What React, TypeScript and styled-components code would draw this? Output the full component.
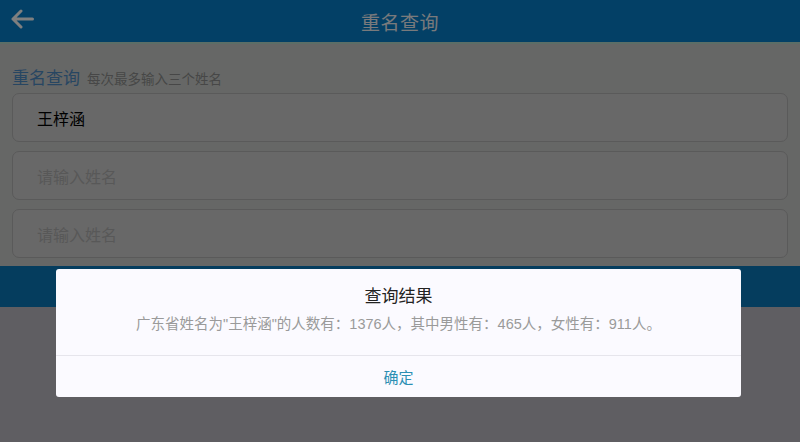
import styled, { createGlobalStyle } from "styled-components";

const GlobalStyle = createGlobalStyle`
  html, body {
    margin: 0;
    padding: 0;
    background: #bfbdc5;
    font-family: "Noto Sans CJK SC", "Noto Sans", sans-serif;
  }
`;

const names = ["王梓涵", "", ""];

export default function App() {
  return (
    <>
      <GlobalStyle />
      <StyledPage>
        <StyledHeader>
          <StyledBack aria-label="返回">
            <svg width="24" height="20" viewBox="0 0 24 20" fill="none">
              <path
                d="M22.5 10H3M11 2L3 10l8 8"
                stroke="#ffffff"
                strokeWidth="3"
                strokeLinecap="round"
                strokeLinejoin="round"
              />
            </svg>
          </StyledBack>
          <StyledTitle>重名查询</StyledTitle>
        </StyledHeader>

        <StyledForm>
          <StyledLabelRow>
            <StyledLabel>重名查询</StyledLabel>
            <StyledHint>每次最多输入三个姓名</StyledHint>
          </StyledLabelRow>
          {names.map((name, i) => (
            <StyledInput key={i} defaultValue={name} placeholder="请输入姓名" />
          ))}
        </StyledForm>

        <StyledSubmit aria-label="查询" />
      </StyledPage>

      <StyledOverlay />

      <StyledDialog>
        <StyledDialogBody>
          <StyledDialogTitle>查询结果</StyledDialogTitle>
          <StyledDialogText>
            广东省姓名为"王梓涵"的人数有：1376人，其中男性有：465人，女性有：911人。
          </StyledDialogText>
        </StyledDialogBody>
        <StyledDialogButton>确定</StyledDialogButton>
      </StyledDialog>
    </>
  );
}

const StyledPage = styled.div`
  min-height: 442px;
  display: flex;
  flex-direction: column;
`;

const StyledHeader = styled.header`
  height: 42px;
  background: #0680cc;
  border-bottom: 2px solid #b9dccf;
  display: flex;
  align-items: center;
  justify-content: center;
  position: relative;
`;

const StyledBack = styled.span`
  position: absolute;
  left: 10px;
  top: 9px;
  display: flex;
`;

const StyledTitle = styled.h1`
  margin: 0;
  font-size: 19px;
  font-weight: 400;
  color: #f2f4f8;
  letter-spacing: 0.5px;
`;

const StyledForm = styled.section`
  background: #cdcecd;
  padding: 20px 12px 8px;
  display: flex;
  flex-direction: column;
  gap: 9px;
`;

const StyledLabelRow = styled.div`
  display: flex;
  align-items: baseline;
  gap: 7px;
  height: 20px;
`;

const StyledLabel = styled.span`
  font-size: 17px;
  color: #4f8cc4;
`;

const StyledHint = styled.span`
  font-size: 13.5px;
  color: #8e8e8e;
`;

const StyledInput = styled.input`
  box-sizing: border-box;
  height: 49px;
  width: 100%;
  padding: 0 24px;
  border: 1px solid #b4b4b4;
  border-radius: 7px;
  background: #d0d0d0;
  font-family: inherit;
  font-size: 16px;
  color: #000000;
  outline: none;

  &::placeholder {
    color: #b0b0b0;
  }
`;

const StyledSubmit = styled.button`
  height: 41px;
  border: none;
  background: #0a7abc;
`;

const StyledOverlay = styled.div`
  position: fixed;
  inset: 0;
  background: rgba(0, 0, 0, 0.5);
`;

const StyledDialog = styled.div`
  position: fixed;
  top: 269px;
  left: 56px;
  width: 685px;
  background: #fbfaff;
  border-radius: 3px;
  display: flex;
  flex-direction: column;
`;

const StyledDialogBody = styled.div`
  padding: 15px 20px 21px;
  border-bottom: 1px solid #e6e5ec;
  display: flex;
  flex-direction: column;
  align-items: center;
  gap: 8px;
`;

const StyledDialogTitle = styled.h2`
  margin: 0;
  font-size: 17px;
  line-height: 22px;
  font-weight: 400;
  color: #222222;
`;

const StyledDialogText = styled.p`
  margin: 0;
  font-family: "Liberation Sans", "Noto Sans CJK SC", sans-serif;
  font-size: 14.5px;
  line-height: 20px;
  color: #9a9a9a;
`;

const StyledDialogButton = styled.button`
  height: 41px;
  border: none;
  background: transparent;
  font-family: inherit;
  font-size: 15px;
  color: #2c8fb3;
`;
